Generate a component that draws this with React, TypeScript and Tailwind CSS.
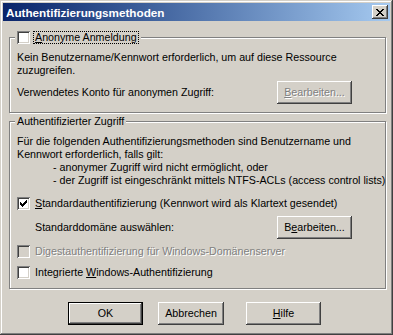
import type { ReactNode } from "react";

const raised =
  "shadow-[inset_-1px_-1px_#404040,inset_1px_1px_#ffffff,inset_-2px_-2px_#808080,inset_2px_2px_#D4D0C8]";

function Check() {
  // classic 7x7 pixel check mark
  return (
    <svg width="7" height="7" viewBox="0 0 7 7" shapeRendering="crispEdges" className="absolute left-[3px] top-[3px]">
      <path
        d="M6 0h1v3h-1zM5 1h1v3h-1zM4 2h1v3h-1zM3 3h1v3h-1zM2 4h1v3h-1zM1 3h1v3h-1zM0 2h1v3h-1z"
        fill="#000"
      />
    </svg>
  );
}

function Box({ checked, disabled }: { checked?: boolean; disabled?: boolean }) {
  return (
    <span
      className={`relative inline-block w-[13px] h-[13px] shrink-0 shadow-[inset_1px_1px_#808080,inset_-1px_-1px_#ffffff,inset_2px_2px_#404040,inset_-2px_-2px_#D4D0C8] ${
        disabled ? "bg-[#D4D0C8]" : "bg-white"
      }`}
    >
      {checked && <Check />}
    </span>
  );
}

function Btn({ children, w, disabled, def }: { children: ReactNode; w: string; disabled?: boolean; def?: boolean }) {
  return (
    <div
      className={`${w} h-[23px] shrink-0 bg-[#D4D0C8] flex items-center justify-center ${
        def ? "border border-black" : ""
      }`}
    >
      <div
        className={`w-full h-full flex items-center justify-center ${raised} ${
          disabled ? "text-[#808080] [text-shadow:1px_1px_#ffffff]" : "text-black"
        }`}
      >
        {children}
      </div>
    </div>
  );
}

function Group({ legend, children, className }: { legend: ReactNode; children: ReactNode; className: string }) {
  return (
    <fieldset
      className={`min-w-0 border border-[#808080] shadow-[inset_1px_1px_#ffffff,1px_1px_#ffffff] px-[7px] mr-[1px] ${className}`}
    >
      <legend className="-ml-[2px] px-[2px] bg-[#D4D0C8] h-[13px] leading-[13px]">{legend}</legend>
      {children}
    </fieldset>
  );
}

export default function App() {
  return (
    <div
      className="w-[393px] h-[335px] bg-[#D4D0C8] p-[3px] flex flex-col text-[10.7px] leading-[13px] text-black whitespace-nowrap shadow-[inset_-1px_-1px_#404040,inset_1px_1px_#D4D0C8,inset_-2px_-2px_#808080,inset_2px_2px_#ffffff]"
      style={{ fontFamily: "'Liberation Sans', Arial, sans-serif" }}
    >
      {/* title bar */}
      <div className="h-[18px] shrink-0 flex items-center justify-between pl-[3px] pr-[2px] bg-gradient-to-r from-[#0A246A] to-[#A6CAF0]">
        <span className="text-white font-bold text-[11.7px]">Authentifizierungsmethoden</span>
        <div className={`w-[16px] h-[14px] bg-[#D4D0C8] flex items-center justify-center ${raised}`}>
          <svg width="8" height="7" viewBox="0 0 8 7" shapeRendering="crispEdges">
            <path
              d="M0 0h2v1h-2zM6 0h2v1h-2zM1 1h2v1h-2zM5 1h2v1h-2zM2 2h4v1h-4zM3 3h2v1h-2zM2 4h4v1h-4zM1 5h2v1h-2zM5 5h2v1h-2zM0 6h2v1h-2zM6 6h2v1h-2z"
              fill="#000"
            />
          </svg>
        </div>
      </div>

      <div className="flex flex-col pl-[6px] pr-[3px]">
        {/* anonymous group */}
        <Group
          className="mt-[10px] pt-[7px] pb-[8px]"
          legend={
            <span className="flex items-center gap-[3px]">
              <Box />
              <span className="border border-dotted border-black px-[1px] leading-[11px]">
                <u className="underline-offset-[1px]">A</u>nonyme Anmeldung
              </span>
            </span>
          }
        >
          <p>Kein Benutzername/Kennwort erforderlich, um auf diese Ressource</p>
          <p>zuzugreifen.</p>
          <div className="flex items-center mt-[4px]">
            <span>Verwendetes Konto für anonymen Zugriff:</span>
            <div className="ml-auto mr-[26px]">
              <Btn w="w-[75px]" disabled>
                <span>
                  <u className="underline-offset-[1px]">B</u>earbeiten...
                </span>
              </Btn>
            </div>
          </div>
        </Group>

        {/* authenticated access group */}
        <Group className="mt-[2px] pt-[7px] pb-[9px]" legend={<span>Authentifizierter Zugriff</span>}>
          <p>Für die folgenden Authentifizierungsmethoden sind Benutzername und</p>
          <p>Kennwort erforderlich, falls gilt:</p>
          <p className="pl-[36px]">- anonymer Zugriff wird nicht ermöglicht, oder</p>
          <p className="pl-[36px]">- der Zugriff ist eingeschränkt mittels NTFS-ACLs (access control lists)</p>

          <div className="flex items-center gap-[5px] mt-[10px]">
            <Box checked />
            <span>
              <u className="underline-offset-[1px]">S</u>tandardauthentifizierung (Kennwort wird als Klartext gesendet)
            </span>
          </div>
          <div className="flex items-center mt-[6px] pl-[18px]">
            <span>Standarddomäne auswählen:</span>
            <div className="ml-auto mr-[26px]">
              <Btn w="w-[75px]">
                <span>
                  B<u className="underline-offset-[1px]">e</u>arbeiten...
                </span>
              </Btn>
            </div>
          </div>
          <div className="flex items-center gap-[5px] mt-[6px]">
            <Box disabled />
            <span className="text-[#808080] [text-shadow:1px_1px_#ffffff]">
              Di<u className="underline-offset-[1px]">g</u>estauthentifizierung für Windows-Domänenserver
            </span>
          </div>
          <div className="flex items-center gap-[5px] mt-[8px]">
            <Box />
            <span>
              Integrierte <u className="underline-offset-[1px]">W</u>indows-Authentifizierung
            </span>
          </div>
        </Group>

        {/* dialog buttons */}
        <div className="flex mt-[13px] pl-[59px]">
          <Btn w="w-[75px]" def>
            OK
          </Btn>
          <div className="ml-[15px]">
            <Btn w="w-[66px]">Abbrechen</Btn>
          </div>
          <div className="ml-[22px]">
            <Btn w="w-[75px]">
              <span>
                <u className="underline-offset-[1px]">H</u>ilfe
              </span>
            </Btn>
          </div>
        </div>
      </div>
    </div>
  );
}
